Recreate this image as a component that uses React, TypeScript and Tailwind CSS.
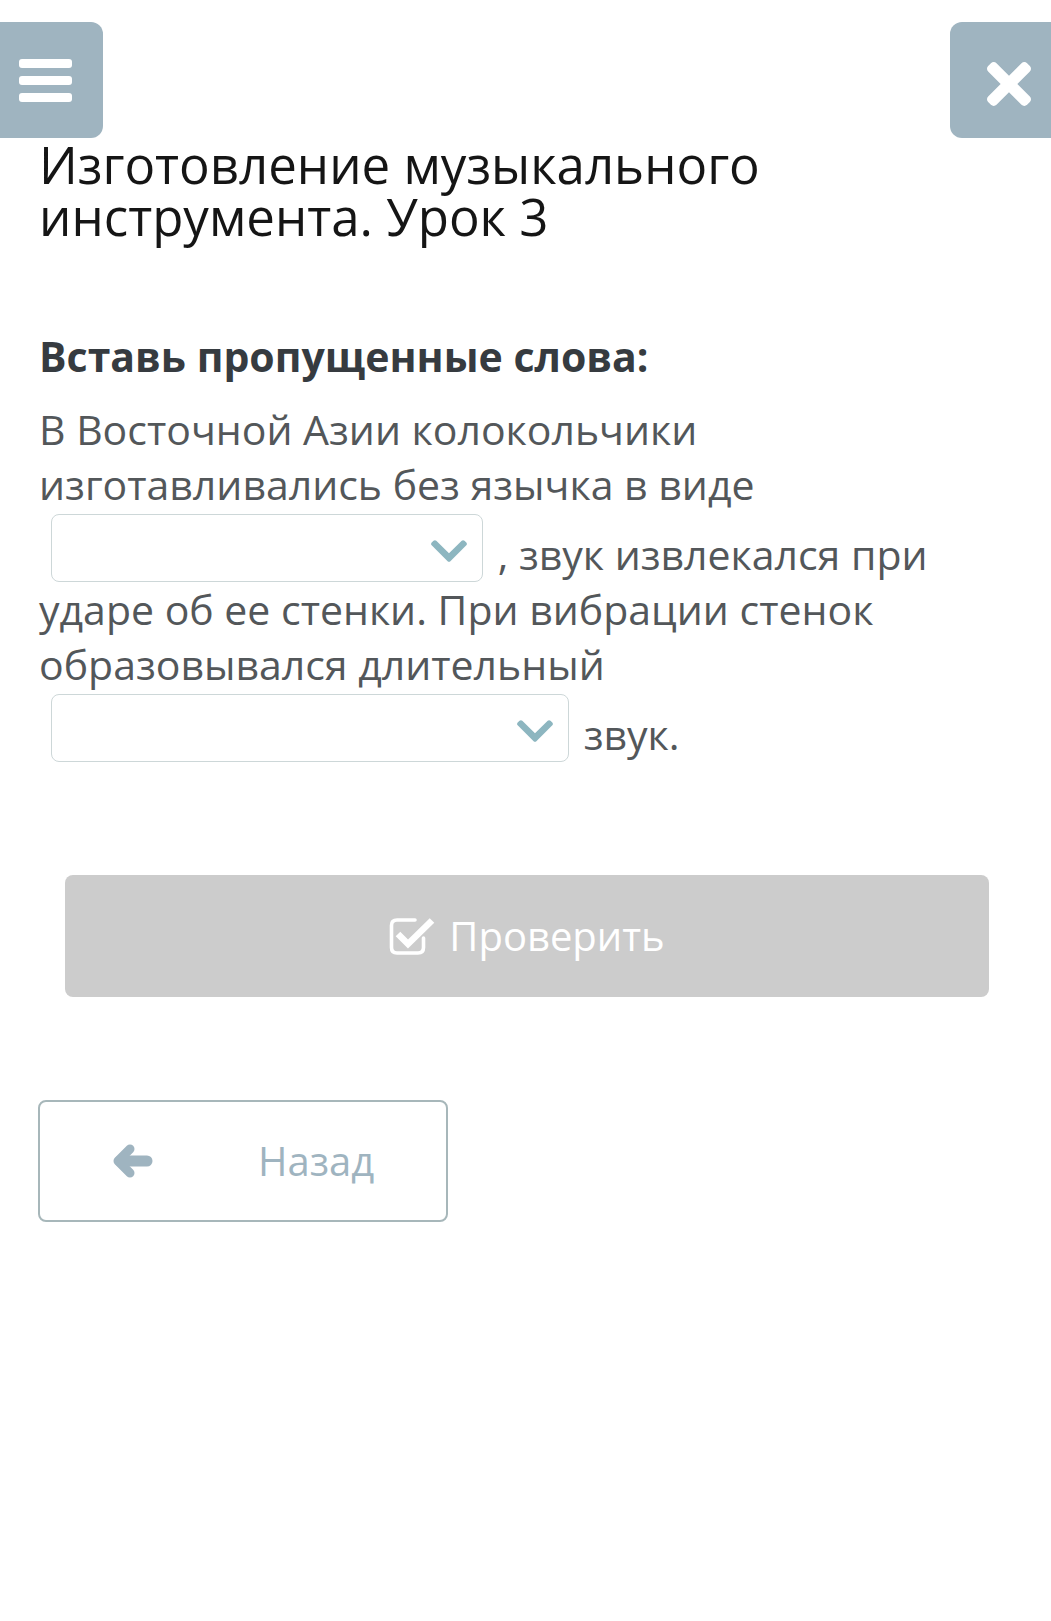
import React from "react";
import { FaTimes, FaChevronDown } from "react-icons/fa";

function Dropdown({ width }: { width: string }) {
  return (
    <span
      className={`inline-block overflow-hidden ${width} h-[68px] ml-[12px] mr-[4px] mt-[2px] -mb-[1px] align-[-11px] border-[1.5px] border-[#cdd7d8] rounded-[8px] bg-white`}
    >
      <span className="flex h-full w-full items-center justify-end pr-[12px] pt-[6px]">
        <FaChevronDown size={42} color="#8db6c0" />
      </span>
    </span>
  );
}

function CheckSquareIcon() {
  return (
    <svg width="46" height="38" viewBox="0 0 46 38" fill="none" className="shrink-0">
      <path
        d="M26 3 H8 Q2.5 3 2.5 8.5 V30.5 Q2.5 36 8 36 H29 Q34.5 36 34.5 30.5 V21"
        stroke="white"
        strokeWidth="3.6"
        strokeLinecap="round"
      />
      <path d="M9 17 L19 27 L43 3.5" stroke="white" strokeWidth="6.5" strokeLinejoin="miter" />
    </svg>
  );
}

function ArrowLeftIcon() {
  return (
    <svg width="40" height="34" viewBox="0 0 40 34" fill="none" className="shrink-0">
      <polyline
        points="17,5 5,17 17,29"
        stroke="#9fb4c0"
        strokeWidth="9"
        strokeLinecap="round"
        strokeLinejoin="round"
      />
      <line x1="7" y1="17" x2="34" y2="17" stroke="#9fb4c0" strokeWidth="11" strokeLinecap="round" />
    </svg>
  );
}

export default function App() {
  return (
    <div className="min-h-[1621px] w-full bg-white font-['Open_Sans',sans-serif]">
      <div className="flex justify-between pt-[22px]">
        <div className="w-[103px] h-[116px] bg-[#9fb4c0] rounded-r-[12px] flex flex-col justify-center gap-[8px] pl-[19px]">
          <div className="w-[53px] h-[9px] bg-white rounded-[3px]" />
          <div className="w-[53px] h-[9px] bg-white rounded-[3px]" />
          <div className="w-[53px] h-[9px] bg-white rounded-[3px]" />
        </div>
        <div className="w-[101px] h-[116px] bg-[#9fb4c0] rounded-l-[12px] flex items-center pl-[27px] pt-[8px]">
          <FaTimes size={64} color="#ffffff" />
        </div>
      </div>

      <h1 className="px-[39px] text-[51px] leading-[52px] font-normal text-[#151515]">
        Изготовление музыкального
        <br />
        инструмента. Урок 3
      </h1>

      <h2 className="px-[39px] mt-[86px] text-[41px] leading-[57px] font-bold text-[#363b40]">
        Вставь пропущенные слова:
      </h2>

      <p className="px-[39px] mt-[17px] text-[41px] leading-[55px] text-[#53575a]">
        В Восточной Азии колокольчики
        <br />
        изготавливались без язычка в виде
        <br />
        <Dropdown width="w-[432px]" /> , звук извлекался при
        <br />
        ударе об ее стенки. При вибрации стенок
        <br />
        образовывался длительный
        <br />
        <Dropdown width="w-[518px]" /> звук.
      </p>

      <button
        type="button"
        className="mt-[113px] ml-[65px] w-[924px] h-[122px] bg-[#cccccc] rounded-[8px] flex items-center justify-center gap-[14px] text-white text-[40px]"
      >
        <CheckSquareIcon />
        <span>Проверить</span>
      </button>

      <button
        type="button"
        className="mt-[103px] ml-[38px] w-[410px] h-[122px] border-2 border-[#a7b7ba] rounded-[8px] flex items-center pl-[73px] text-[#9fb4c0] text-[40px]"
      >
        <ArrowLeftIcon />
        <span className="ml-[105px]">Назад</span>
      </button>
    </div>
  );
}
